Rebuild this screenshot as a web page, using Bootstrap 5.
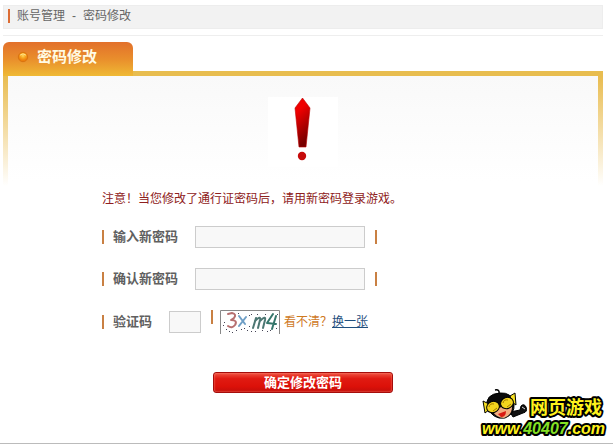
<!DOCTYPE html>
<html lang="zh-CN">
<head>
<meta charset="utf-8">
<meta name="viewport" content="width=device-width, initial-scale=1">
<title>密码修改</title>
<link href="https://cdn.jsdelivr.net/npm/bootstrap@5.3.0/dist/css/bootstrap.min.css" rel="stylesheet">
<style>
body{font-family:"Liberation Sans","Noto Sans CJK SC",sans-serif;font-size:12px;line-height:18px;color:#666;background:#fff}
.page{min-height:100vh;border-bottom:1px solid #bbb;padding:5px 10px 0 3px}
.crumbs{background:#f2f2f2;border:1px solid #ededed;height:24px;padding:0 4px 2px;font-size:12px}
.crumbs .here{margin-left:7px}
.crumbs .dash{padding:0 7px}
.tick{width:2px;height:14px;background:#c98043;flex:none}
.crumbs .tick{background:#dc6c34}
.rule{border-top:1px solid #eee;margin-top:6px;height:7px}
.tab-head{width:130px;height:34px;margin-bottom:-5px;border-radius:6px 6px 0 0;padding:0 0 4px 14px;background:linear-gradient(#e2702b,#e98e2c 50%,#efb934);position:relative}
.tab-head h1{font-family:"Noto Sans CJK SC",sans-serif;font-size:15px;line-height:20px;padding-bottom:2px;font-weight:700;color:#fffbe4}
.frame{padding:5px 5px 0;background:linear-gradient(#e8bd4f,#e8bd4f) top/100% 5px no-repeat,linear-gradient(#e8b947,#fff) left top/5px 115px no-repeat,linear-gradient(#e8b947,#fff) right top/5px 115px no-repeat}
.panel{background:linear-gradient(#f9f9f9,#fff 105px);padding:21px 10px 0 94px}
.warn-pic{display:block;width:70px;height:70px;margin-left:166px;background:#fff}
.notice{color:#8e2020;margin:23px 0 18px}
.fields{display:grid;gap:20px}
.line{min-height:22px}
.line label{font-family:"Noto Sans CJK SC",sans-serif;font-size:13px;font-weight:700;color:#606060;margin-left:9px;padding-bottom:2px}
.wide-label{width:82px}
.short-label{width:56px}
.line .form-control{border:1px solid #ccc;background:#f8f8f8;height:22px;padding:0 4px;font-size:12px;border-radius:0;min-height:0}
.line .pass-box{width:170px}
.line .code-box{width:32px}
.line .after{margin-left:10px}
.captcha{width:60px;height:24px;display:block;margin-left:7px}
.ask{color:#cf7a1f}
.swap{color:#1f4f7e}
.line .raised{align-self:flex-start}
.send{width:180px;height:21px;margin:38px 0 0 111px;padding:0 0 2px;border:1px solid #a50d0b;border-radius:3px;background:linear-gradient(#ef5140,#e01b12 30%,#dc1109 70%,#c40e0a);box-shadow:inset 0 0 2px #ff9a84;font:700 13px/17px "Noto Sans CJK SC",sans-serif;color:#fff}
.stamp{right:5px;bottom:4px;width:128px;height:52px}
.stamp text{font-family:"Liberation Sans","Noto Sans CJK SC",sans-serif;font-weight:700;paint-order:stroke;stroke:#000;stroke-linejoin:round}
</style>
<script src="https://cdn.jsdelivr.net/npm/bootstrap@5.3.0/dist/js/bootstrap.bundle.min.js"></script>
</head>
<body>
<div class="page position-relative">
  <nav class="crumbs d-flex align-items-center" aria-label="位置">
    <span class="tick"></span><span class="here">账号管理</span><span class="dash">-</span><span>密码修改</span>
  </nav>
  <div class="rule"></div>
  <main>
    <div class="tab-head d-flex align-items-center">
      <svg width="12" height="12" viewBox="0 0 12 12" aria-hidden="true"><defs><radialGradient id="ball" cy=".35"><stop offset="0" stop-color="#ffd860"/><stop offset=".5" stop-color="#f8a823"/><stop offset="1" stop-color="#ed7f0c"/></radialGradient></defs><circle cx="6" cy="6" r="4.700" fill="url(#ball)" stroke="#d9730f"/><path d="M3 4.200Q6 1.500 9 4.200" fill="none" stroke="#ffe18a"/></svg>
      <h1 class="mb-0 ms-2">密码修改</h1>
    </div>
    <div class="frame">
      <div class="panel">
        <svg class="warn-pic" viewBox="0 0 70 70" role="img" aria-label="注意"><defs><linearGradient id="red" x2=".3" y2="1"><stop offset="0" stop-color="#e00"/><stop offset=".3" stop-color="#f00000"/><stop offset="1" stop-color="#700"/></linearGradient></defs><path d="M34.500 1L42 11L38 50H31L27 11Z" fill="url(#red)" stroke="#b00" stroke-width=".6"/><circle cx="34" cy="59" r="4.200" fill="#c60b0b"/></svg>
        <p class="notice">注意！当您修改了通行证密码后，请用新密码登录游戏。</p>
        <form>
          <div class="fields">
            <div class="line d-flex align-items-center">
              <span class="tick"></span><label class="wide-label" for="pw">输入新密码</label>
              <input class="form-control pass-box" type="password" id="pw"><span class="tick after"></span>
            </div>
            <div class="line d-flex align-items-center">
              <span class="tick"></span><label class="wide-label" for="pw2">确认新密码</label>
              <input class="form-control pass-box" type="password" id="pw2"><span class="tick after"></span>
            </div>
            <div class="line d-flex align-items-center">
              <span class="tick"></span><label class="short-label" for="code">验证码</label>
              <input class="form-control code-box" type="text" id="code"><span class="tick raised after"></span>
              <svg class="captcha" viewBox="0 0 60 24" role="img" aria-label="验证码图片"><path d="M.5 24V.5H59.500V24" fill="#fff" stroke="#888"/>
                <g fill="none" stroke-linecap="round" stroke-linejoin="round"><path d="M8 4L12 3Q17 4 14 8L11 10Q18 10 15 15Q12 19 8 16" stroke="#b66f70" stroke-width="2"/><path d="M19 6L25 14M26 7L19 16" stroke="#6f9fc6" stroke-width="2"/><path d="M36 8L33 18M35 11Q41 5 40 10L38 18M40 11Q46 5 45 10L43 18" stroke="#4d7773" stroke-width="2"/><path d="M53 4L47 13L56 14M56 6L52 19" stroke="#35766b" stroke-width="2"/></g>
                <path fill="#445" d="M4 12h1v1h-1zM6 19h1v1h-1zM3 15h1v1h-1zM18 3h1v1h-1zM29 5h1v1h-1zM31 4h1v1h-1zM21 19h1v1h-1zM27 20h1v1h-1zM31 21h1v1h-1zM16 20h1v1h-1zM42 20h1v1h-1zM47 21h1v1h-1zM37 4h1v1h-1zM45 4h1v1h-1zM56 18h1v1h-1zM12 22h1v1h-1zM24 18h1v1h-1zM57 4h1v1h-1zM35 21h1v1h-1zM29 16h1v1h-1zM50 20h1v1h-1zM9 21h1v1h-1z"/></svg>
              <span class="ask ms-1">看不清？</span><a class="swap" href="#">换一张</a>
            </div>
          </div>
          <button class="send btn d-block" type="submit">确定修改密码</button>
        </form>
      </div>
    </div>
  </main>
  <svg class="stamp position-absolute" viewBox="0 0 128 52" role="img" aria-label="网页游戏 www.40407.com">
    <g stroke="#000" stroke-linejoin="round"><path d="M30 25L40 23L41 19Q44 16 46 20Q48 25 43 26L33 30Z" fill="#111"/><path d="M19 7Q20 2 15 3" fill="none" stroke-width="1.500"/><path d="M7 20Q5 7 20 6Q32 5 34 17Q35 27 25 31Q13 33 7 20Z" fill="#0b0b0b"/><path d="M12 23L32 17Q33 28 24 31Q16 31 12 23Z" fill="#f2ad80" stroke="none"/><path d="M3 14L5 26L10 22L9 17ZM30 9L35 6L36 18L32 15Z" fill="#f6df22"/><ellipse cx="13" cy="20" rx="6.500" ry="5.500" fill="#f4d51d" transform="rotate(-20 13 20)"/><ellipse cx="27" cy="16" rx="6.500" ry="5.500" fill="#f4d51d" transform="rotate(-20 27 16)"/></g>
    <path d="M9 20Q10 16 14 17M23 16Q24 12 28 13M13 24L17 21M27 20L31 17" fill="none" stroke="#a67a00"/><path d="M18 27L26 24Q26 30 21 30Z" fill="#d91b13"/><path d="M42 20L45 22" stroke="#ddd"/>
    <text x="50" y="27" font-size="18" fill="#fff21c" stroke-width="4">网页游戏</text>
    <text x="2" y="47" font-size="16" font-style="italic" fill="#fff21c" stroke-width="4">www.<tspan fill="#83e024">40407</tspan>.com</text>
  </svg>
</div>
</body>
</html>
